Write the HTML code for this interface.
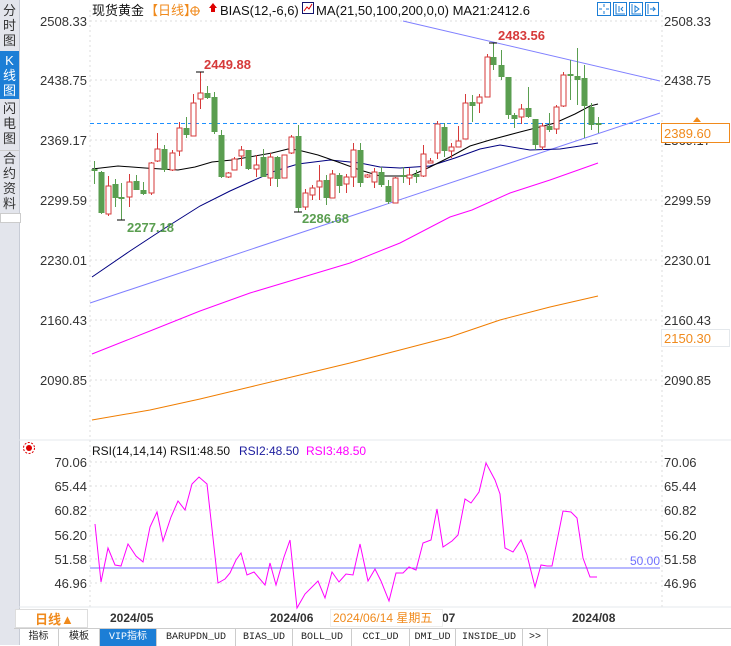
<!DOCTYPE html>
<html><head><meta charset="utf-8"><style>
body{margin:0;width:731px;height:645px;overflow:hidden;background:#fff;font-family:"Liberation Sans","Noto Sans CJK SC",sans-serif;position:relative}
.sb{position:absolute;left:0;top:0;width:19px;height:645px;background:#e3e5ec;border-right:1px solid #c8ccd6}
.vt{position:absolute;left:0;width:19px;font-size:13px;line-height:15px;text-align:center;color:#333}
.tabs{position:absolute;left:14px;top:628px;width:717px;height:17px;border-top:1px solid #ccc;font-family:"Liberation Mono","Noto Sans CJK SC",monospace;font-size:10px}
.tabs span{position:absolute;top:0;height:17px;line-height:17px;text-align:center;border-right:1px solid #ccc;color:#222}
</style></head><body>
<div class="sb"></div>
<div class="vt" style="top:3px">分<br>时<br>图</div>
<div class="vt" style="top:51px;height:46px;background:#1c7ed6;color:#fff;padding-top:2px">K<br>线<br>图</div>
<div class="vt" style="top:101px">闪<br>电<br>图</div>
<div class="vt" style="top:150px;border-top:1px solid #ccc">合<br>约<br>资<br>料</div>
<div style="position:absolute;left:0;top:213px;width:19px;height:8px;background:#fff;border:1px solid #ccc"></div>
<svg width="731" height="645" style="position:absolute;left:0;top:0" id="s" font-family="Liberation Sans, Noto Sans CJK SC, sans-serif">
<g stroke="#ddd" stroke-dasharray="2,3">
<line x1="90" y1="21" x2="660" y2="21"/><line x1="90" y1="80" x2="660" y2="80"/><line x1="90" y1="140" x2="660" y2="140"/><line x1="90" y1="200" x2="660" y2="200"/><line x1="90" y1="260" x2="660" y2="260"/><line x1="90" y1="320" x2="660" y2="320"/><line x1="90" y1="380" x2="660" y2="380"/>
<line x1="90" y1="462" x2="660" y2="462"/><line x1="90" y1="486" x2="660" y2="486"/><line x1="90" y1="510" x2="660" y2="510"/><line x1="90" y1="535" x2="660" y2="535"/><line x1="90" y1="559" x2="660" y2="559"/><line x1="90" y1="583" x2="660" y2="583"/>
<line x1="90" y1="10" x2="90" y2="610"/><line x1="662" y1="10" x2="662" y2="610"/>
</g>
<line x1="19" y1="440" x2="731" y2="440" stroke="#e4e8ec"/>
<line x1="19" y1="607" x2="731" y2="607" stroke="#e4e8ec"/>
<g font-size="13" fill="#333" text-anchor="end">
<text x="87" y="26">2508.33</text><text x="87" y="85">2438.75</text><text x="87" y="145">2369.17</text><text x="87" y="205">2299.59</text><text x="87" y="265">2230.01</text><text x="87" y="325">2160.43</text><text x="87" y="385">2090.85</text>
<text x="87" y="467">70.06</text><text x="87" y="491">65.44</text><text x="87" y="515">60.82</text><text x="87" y="540">56.20</text><text x="87" y="564">51.58</text><text x="87" y="588">46.96</text>
</g>
<g font-size="13" fill="#333">
<text x="664" y="26">2508.33</text><text x="664" y="85">2438.75</text><text x="664" y="145">2369.17</text><text x="664" y="205">2299.59</text><text x="664" y="265">2230.01</text><text x="664" y="325">2160.43</text><text x="664" y="385">2090.85</text>
<text x="664" y="467">70.06</text><text x="664" y="491">65.44</text><text x="664" y="515">60.82</text><text x="664" y="540">56.20</text><text x="664" y="564">51.58</text><text x="664" y="588">46.96</text>
</g>
<rect x="661.5" y="123.5" width="68" height="19" fill="#fff" stroke="#f08a1c"/>
<text x="664" y="138" font-size="13" fill="#f08a1c">2389.60</text>
<path d="M693 122l4-5 4 5z" fill="#f08a1c"/>
<rect x="661.5" y="329.5" width="68" height="17" fill="#fff" stroke="#e4e8ec"/>
<text x="664" y="343" font-size="13" fill="#f08a1c">2150.30</text>
<text x="92" y="15" font-size="13" fill="#111">现货黄金</text>
<text x="145" y="15" font-size="13" fill="#f08a1c">【日线】</text>
<circle cx="195" cy="11" r="4" fill="none" stroke="#f08a1c"/><path d="M190 11h10M195 6v10" stroke="#f08a1c"/>
<path d="M209 8l4-5 4 5h-2v4h-4v-4z" fill="#d00"/>
<text x="220" y="15" font-size="13" fill="#111">BIAS(12,-6,6)</text>
<rect x="302.5" y="2.5" width="11" height="11" fill="#fff" stroke="#13136b"/><path d="M304 11l3-4 2 2 3-5" stroke="#d00" fill="none"/>
<text x="316" y="15" font-size="13" fill="#111">MA(21,50,100,200,0,0)  MA21:2412.6</text>
<g fill="#fff" stroke="#1c7ed6"><rect x="597.5" y="2.5" width="13" height="13"/><rect x="613.5" y="2.5" width="13" height="13"/><rect x="629.5" y="2.5" width="13" height="13"/><rect x="645.5" y="2.5" width="13" height="13"/></g>
<g stroke="#1c7ed6" fill="none"><path d="M604 4v3M604 11v3M599 9h3M606 9h3"/><path d="M616 4v10h9M619 6v6M623 7l-2 2 2 2"/><path d="M632 4v10h9M635 6v6l4-3z"/><path d="M648 4v10M650 9h5l-2-2M653 11l2-2"/></g>
<g stroke="#8080ff" fill="none"><line x1="403" y1="21" x2="660" y2="81"/><line x1="90" y1="303" x2="660" y2="113"/></g>
<line x1="90" y1="123.5" x2="660" y2="123.5" stroke="#1e90ff" stroke-dasharray="4,3"/>
<polyline fill="none" stroke="#f07d00" points="92,420 150,410 200,399 250,387 300,375 350,363 400,350 450,337 500,320 550,307 598,296"/>
<polyline fill="none" stroke="#ff00ff" points="92,354 150,331 200,311 250,293 300,278 350,263 400,243 450,217 472,210 510,193 550,180 598,163"/>
<polyline fill="none" stroke="#000080" points="92,277 130,251 162,230 200,206 230,191 250,182 275,171 298,164 330,160 360,163 380,167 400,168 430,166 455,158 480,149 500,145 530,150 560,149 580,146 598,143"/>
<polyline fill="none" stroke="#000" points="92,169 118,166 145,168 178,170 195,167 212,162 232,160 272,153 288,149 298,150 318,155 338,162 360,170 380,176 410,176 430,167 450,157 470,146 490,140 520,132 555,123 575,114 590,106 598,104"/>
<g id="c"></g>
<g font-size="13" font-weight="bold">
<text x="204" y="69" fill="#d63a3a">2449.88</text><text x="498" y="40" fill="#d63a3a">2483.56</text>
<text x="127" y="232" fill="#5a9e50">2277.18</text><text x="302" y="223" fill="#5a9e50">2286.68</text>
</g>
<g stroke="#000"><path d="M196 72h8M117 220h8M294 212h8M489 43h8"/></g>
<circle cx="29" cy="448" r="3" fill="#d00"/><circle cx="29" cy="448" r="5.5" fill="none" stroke="#d00" stroke-dasharray="2,1.5"/>
<text x="92" y="455" font-size="12" fill="#111">RSI(14,14,14)  RSI1:48.50</text>
<text x="239" y="455" font-size="12" fill="#1c1c9e">RSI2:48.50</text>
<text x="306" y="455" font-size="12" fill="#ff00ff">RSI3:48.50</text>
<line x1="90" y1="568" x2="660" y2="568" stroke="#7070ff"/>
<text x="630" y="565" font-size="12" fill="#7070ff">50.00</text>
<polyline fill="none" stroke="#ff00ff" points="95,524 101,582 108,548 115,565 121,566 128,544 136,556 143,562 150,527 157,512 163,541 171,517 178,501 185,510 192,484 199,477 207,484 218,583 225,579 230,573 236,560 241,553 247,575 254,572 265,585 270,563 276,585 284,557 290,540 297,608 305,594 318,581 325,598 332,572 339,582 346,574 353,575 360,544 368,581 375,569 381,581 389,601 396,573 403,573 409,567 416,570 423,543 431,540 437,509 443,547 452,541 458,535 465,499 471,503 479,492 486,463 495,480 500,494 505,548 513,552 521,540 527,555 535,587 541,565 547,566 552,566 563,511 571,512 577,518 583,558 590,577 597,577"/>
<rect x="15.5" y="609.5" width="72" height="18" fill="#fff" stroke="#ddd"/>
<text x="35" y="624" font-size="13" font-weight="bold" fill="#f08a1c">日线▲</text>
<g font-size="12" font-weight="bold" fill="#333"><text x="110" y="622">2024/05</text><text x="270" y="622">2024/06</text><text x="442" y="622">07</text><text x="572" y="622">2024/08</text></g>
<rect x="330.5" y="609.5" width="112" height="17" fill="#fff" stroke="#eee"/>
<text x="333" y="622" font-size="12" fill="#f08a1c">2024/06/14 星期五</text>
</svg>
<div class="tabs">
<span style="left:5px;width:39px">指标</span><span style="left:45px;width:40px">模板</span><span style="left:86px;width:56px;background:#1c7ed6;color:#fff">VIP指标</span><span style="left:143px;width:78px">BARUPDN_UD</span><span style="left:222px;width:56px">BIAS_UD</span><span style="left:279px;width:58px">BOLL_UD</span><span style="left:338px;width:57px">CCI_UD</span><span style="left:396px;width:45px">DMI_UD</span><span style="left:442px;width:66px">INSIDE_UD</span><span style="left:509px;width:24px">&gt;&gt;</span>
</div>
<script>
var d=[[94,161,184,169,171,0],[101,171,214,172,213,0],[108,176,216,186,214,1],[115,179,207,184,198,0],[121,183,220,197,199,0],[129,174,207,182,197,1],[136,175,190,181,190,0],[143,182,195,190,194,0],[151,162,195,163,193,1],[157,133,162,149,161,1],[164,145,172,149,170,0],[172,150,171,153,170,1],[179,122,156,128,151,1],[186,117,138,128,135,0],[193,94,136,103,136,1],[200,72,109,93,99,1],[207,86,99,93,98,0],[214,92,134,97,132,0],[221,130,178,135,177,0],[228,172,178,173,177,1],[234,157,170,159,170,1],[241,146,166,150,156,1],[248,150,170,150,169,0],[256,155,177,165,169,1],[263,149,174,157,177,0],[270,153,186,157,178,1],[277,156,187,157,179,0],[284,155,178,155,178,1],[291,135,154,137,153,1],[298,125,212,136,208,0],[305,189,210,193,207,1],[312,185,200,188,195,1],[319,165,200,181,187,1],[326,175,205,180,198,0],[332,170,198,174,198,1],[339,173,193,175,186,0],[346,174,193,177,184,1],[353,143,187,150,177,1],[360,143,187,150,183,0],[367,174,178,175,177,1],[374,168,188,172,182,1],[381,167,187,172,185,0],[388,180,204,186,202,0],[395,177,203,178,203,1],[403,167,183,175,177,0],[409,168,185,175,178,1],[416,170,183,174,177,0],[423,145,177,154,176,1],[430,158,163,161,163,1],[437,121,159,124,153,1],[444,123,157,127,151,0],[451,143,158,147,151,1],[458,126,147,141,147,1],[465,94,139,103,139,1],[472,95,122,102,106,0],[479,94,113,97,103,1],[487,54,97,57,97,1],[493,43,70,57,65,0],[501,50,80,65,77,0],[508,77,119,77,115,0],[514,113,128,115,119,0],[521,104,124,109,117,1],[528,87,118,108,117,0],[535,119,150,119,145,0],[542,123,150,126,147,1],[549,113,132,126,130,0],[556,105,134,107,129,1],[563,72,107,75,106,1],[570,60,100,74,76,0],[577,48,105,76,80,0],[584,65,138,78,106,0],[591,103,130,107,125,0],[598,117,133,123,125,0]];
var g=document.getElementById('c'),h='';
d.forEach(function(c){var col=c[5]?'#d63a3a':'#5a9e50';h+='<line x1="'+(c[0]+.5)+'" y1="'+c[1]+'" x2="'+(c[0]+.5)+'" y2="'+c[2]+'" stroke="'+col+'"/>';var hh=Math.max(c[4]-c[3],1);
if(c[5])h+='<rect x="'+(c[0]-2)+'" y="'+c[3]+'" width="5" height="'+hh+'" fill="#fff" stroke="'+col+'"/>';else h+='<rect x="'+(c[0]-2.5)+'" y="'+c[3]+'" width="6" height="'+hh+'" fill="'+col+'"/>';});
g.innerHTML=h;
</script>
</body></html>
